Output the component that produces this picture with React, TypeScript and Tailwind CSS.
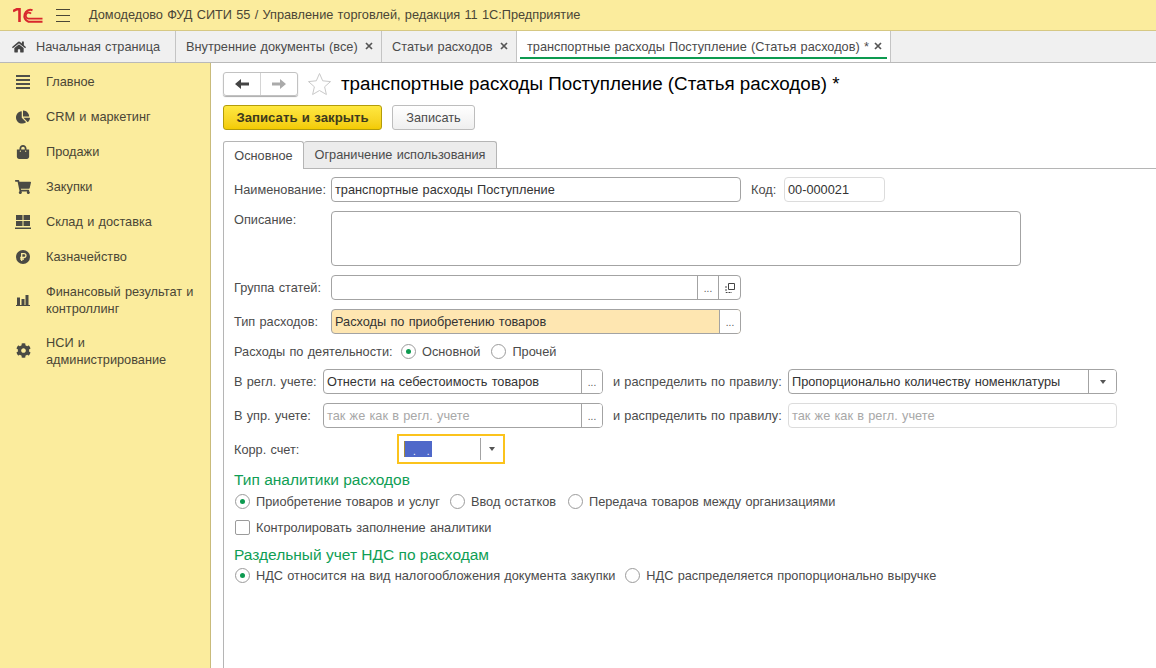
import { ReactNode } from 'react';
import { FaHome, FaChartPie, FaShoppingBag, FaShoppingCart, FaCog } from 'react-icons/fa';

function Logo() {
  return (
    <svg width="30" height="15" viewBox="0 0 30 15" fill="none" stroke="#d8272d">
      <path d="M0 3.2 L4 1.2 H6.5 V14" strokeWidth="2.6" />
      <path d="M29.5 13.8 H15.5 A6 6 0 1 1 19.5 2.2" strokeWidth="2" />
      <path d="M29.5 10.6 H15.5 A3 3 0 1 1 18 5.6" strokeWidth="1.8" />
    </svg>
  );
}

function Burger() {
  return (
    <div className="flex h-[13px] w-[14px] flex-col justify-between">
      <div className="h-px bg-[#4a4636]" />
      <div className="h-px bg-[#4a4636]" />
      <div className="h-px bg-[#4a4636]" />
    </div>
  );
}

function Close() {
  return (
    <svg width="8" height="8" viewBox="0 0 8 8" stroke="#555" strokeWidth="1.7" className="relative -top-px left-px shrink-0">
      <path d="M1 1 L7 7 M7 1 L1 7" />
    </svg>
  );
}

function PageTab({ label, width, active }: { label: string; width: string; active?: boolean }) {
  return (
    <div className={`relative flex h-full items-center justify-between border-r border-[#c4c4c4] pr-[9px] pl-[10px] ${width} ${active ? 'bg-white' : ''}`}>
      <span className="whitespace-nowrap">{label}</span>
      <Close />
      {active && <div className="absolute right-[3px] bottom-[3px] left-[3px] h-[2px] bg-[#0d9a50]" />}
    </div>
  );
}

const MainIcon = () => (
  <svg width="14" height="14" viewBox="0 0 14 14" fill="#4f4f4a">
    <path d="M0 0h14v2H0zM0 4h14v2H0zM0 8h14v2H0zM0 12h14v2H0z" />
  </svg>
);

const StockIcon = () => (
  <svg width="16" height="14" viewBox="0 0 16 14" fill="#4a4a44">
    <path d="M1 0h6.5v5H1zM8.5 0H15v5H8.5zM1 6h6.5v5H1zM8.5 6H15v5H8.5zM0 12.5h16V14H0z" />
  </svg>
);

const RubleIcon = () => (
  <svg width="14" height="14" viewBox="0 0 14 14">
    <circle cx="7" cy="7" r="7" fill="#4a4a44" />
    <path d="M5.7 11V3.6H8a1.9 1.9 0 0 1 0 3.9H4.2M4.2 9.2H8" fill="none" stroke="#fbec9d" strokeWidth="1.3" />
  </svg>
);

const FinanceIcon = () => (
  <svg width="14" height="11" viewBox="0 0 14 11" fill="#4a4a44">
    <path d="M1 2.5h3V10H1zM5.5 4h3v6h-3zM9.5 0h3v10h-3zM0 10h14v1H0z" />
  </svg>
);

const menu: { label: ReactNode; icon: ReactNode; h: string }[] = [
  { label: 'Главное', icon: <MainIcon />, h: 'h-[35px]' },
  { label: 'CRM и маркетинг', icon: <FaChartPie size={14} color="#4a4a44" />, h: 'h-[35px]' },
  { label: 'Продажи', icon: <FaShoppingBag size={14} color="#4a4a44" />, h: 'h-[35px]' },
  { label: 'Закупки', icon: <FaShoppingCart size={16} color="#4a4a44" />, h: 'h-[35px]' },
  { label: 'Склад и доставка', icon: <StockIcon />, h: 'h-[35px]' },
  { label: 'Казначейство', icon: <RubleIcon />, h: 'h-[35px]' },
  { label: <>Финансовый результат и<br />контроллинг</>, icon: <FinanceIcon />, h: 'h-[52px]' },
  { label: <>НСИ и<br />администрирование</>, icon: <FaCog size={15} color="#4a4a44" />, h: 'h-[49px]' },
];

function Sidebar() {
  return (
    <aside className="w-[211px] shrink-0 border-r border-[#c9bb7b] bg-[#fbec9d] pt-[1px] text-[#4a4636]">
      {menu.map((m, i) => (
        <div key={i} className={`flex items-center ${m.h}`}>
          <div className="flex w-[46px] shrink-0 justify-center pr-[1px] pl-[1px]">{m.icon}</div>
          <div className="leading-[17px]">{m.label}</div>
        </div>
      ))}
    </aside>
  );
}

function Field({ children, width, bg, dim, h }: { children?: ReactNode; width: string; bg?: string; dim?: boolean; h?: string }) {
  return (
    <div className={`flex ${h ?? 'h-[25px]'} ${width} shrink-0 overflow-hidden rounded-[4px] border ${dim ? 'border-[#dcdcdc]' : 'border-[#a3a3a3]'} ${bg ?? 'bg-white'} text-[#333]`}>
      {children}
    </div>
  );
}

function Value({ text, grey }: { text?: string; grey?: boolean }) {
  return <div className={`flex-1 truncate pl-[3px] leading-[24px] ${grey ? 'text-[#a8a8a8]' : ''}`}>{text}</div>;
}

function Dots() {
  return <div className="flex w-[21px] shrink-0 items-end justify-center border-l border-[#a3a3a3] bg-white pb-[5px] text-[10px] leading-[10px] text-[#555]">...</div>;
}

function Arrow({ width }: { width: string }) {
  return (
    <div className={`flex shrink-0 items-center justify-center border-l border-[#a3a3a3] bg-white ${width}`}>
      <div className="h-0 w-0 border-x-[3.5px] border-t-[4px] border-x-transparent border-t-[#555]" />
    </div>
  );
}

function Radio({ label, on }: { label: string; on?: boolean }) {
  return (
    <div className="flex items-center gap-[6px] whitespace-nowrap">
      <div className="flex h-[15px] w-[15px] items-center justify-center rounded-full border border-[#9b9b9b] bg-white">
        {on && <div className="h-[5px] w-[5px] rounded-full bg-[#0d9a50]" />}
      </div>
      {label}
    </div>
  );
}

function Form() {
  return (
    <div className="flex-1 border-l border-[#b5b5b5] pt-[8px] pl-[10px] text-[#4b4b4b]">
      <div className="flex items-center">
        <div className="w-[97px] shrink-0">Наименование:</div>
        <Field width="w-[410px]"><Value text="транспортные расходы Поступление" /></Field>
        <div className="ml-[10px] w-[33px] shrink-0">Код:</div>
        <Field width="w-[101px]" dim><Value text="00-000021" /></Field>
      </div>

      <div className="mt-[9px] flex items-start">
        <div className="w-[97px] shrink-0 pt-[1px]">Описание:</div>
        <Field width="w-[690px]" h="h-[55px]" />
      </div>

      <div className="mt-[9px] flex items-center">
        <div className="w-[97px] shrink-0">Группа статей:</div>
        <Field width="w-[410px]">
          <Value />
          <Dots />
          <div className="flex w-[22px] shrink-0 items-center justify-center border-l border-[#a3a3a3]">
            <svg width="10" height="10" viewBox="0 0 10 10" fill="none" stroke="#444">
              <path d="M3.5 .5h6v6h-6z" />
              <path d="M1 3v6.5h6" strokeDasharray="2 1" />
            </svg>
          </div>
        </Field>
      </div>

      <div className="mt-[9px] flex items-center">
        <div className="w-[97px] shrink-0">Тип расходов:</div>
        <Field width="w-[410px]" bg="bg-[#fee6b1]">
          <Value text="Расходы по приобретению товаров" />
          <Dots />
        </Field>
      </div>

      <div className="mt-[7px] flex h-[21px] items-center">
        <div className="w-[167px] shrink-0 whitespace-nowrap">Расходы по деятельности:</div>
        <Radio label="Основной" on />
        <div className="ml-[11px]"><Radio label="Прочей" /></div>
      </div>

      <div className="mt-[7px] flex items-center">
        <div className="w-[89px] shrink-0">В регл. учете:</div>
        <Field width="w-[280px]">
          <Value text="Отнести на себестоимость товаров" />
          <Dots />
        </Field>
        <div className="ml-[10px] w-[175px] shrink-0 whitespace-nowrap">и распределить по правилу:</div>
        <Field width="w-[329px]">
          <Value text="Пропорционально количеству номенклатуры" />
          <Arrow width="w-[28px]" />
        </Field>
      </div>

      <div className="mt-[9px] flex items-center">
        <div className="w-[89px] shrink-0">В упр. учете:</div>
        <Field width="w-[280px]">
          <Value text="так же как в регл. учете" grey />
          <Dots />
        </Field>
        <div className="ml-[10px] w-[175px] shrink-0 whitespace-nowrap">и распределить по правилу:</div>
        <Field width="w-[329px]" dim><Value text="так же как в регл. учете" grey /></Field>
      </div>

      <div className="mt-[6px] flex items-center">
        <div className="w-[163px] shrink-0 pt-[1px]">Корр. счет:</div>
        <div className="flex h-[30px] w-[108px] items-center border-2 border-[#fbc31c] pl-[5px]">
          <div className="flex h-[16px] w-[28px] items-end gap-[11px] border-l border-[#a58a3a] bg-[#4f68c9] pl-[8px] text-[10px] leading-[11px] text-white">
            <span>.</span>
            <span>.</span>
          </div>
          <div className="ml-[48px] flex h-[22px] flex-1">
            <Arrow width="w-full" />
          </div>
        </div>
      </div>

      <div className="mt-[6px] text-[15.5px] leading-[20px] [word-spacing:0] text-[#0f9e55]">Тип аналитики расходов</div>
      <div className="mt-[1px] flex h-[21px] items-center gap-[10px] pl-[1px]">
        <Radio label="Приобретение товаров и услуг" on />
        <Radio label="Ввод остатков" />
        <div className="ml-[2px]"><Radio label="Передача товаров между организациями" /></div>
      </div>
      <div className="mt-[5px] flex h-[21px] items-center gap-[6px] pl-[1px]">
        <div className="h-[15px] w-[15px] rounded-[2px] border border-[#9b9b9b] bg-white" />
        Контролировать заполнение аналитики
      </div>
      <div className="mt-[7px] text-[15.5px] leading-[20px] [word-spacing:0] text-[#0f9e55]">Раздельный учет НДС по расходам</div>
      <div className="flex h-[21px] items-center gap-[10px] pl-[1px]">
        <Radio label="НДС относится на вид налогообложения документа закупки" on />
        <Radio label="НДС распределяется пропорционально выручке" />
      </div>
    </div>
  );
}

export default function App() {
  return (
    <div className="flex h-[668px] w-[1156px] flex-col overflow-hidden bg-white text-[12.75px] leading-[16px] [word-spacing:0.7px] font-['Liberation_Sans',Arial,sans-serif]">
      <header className="flex h-[31px] shrink-0 items-center border-b border-[#d6c883] bg-[#fbec9d] text-[#4a4636]">
        <div className="ml-[13px] w-[43px]"><Logo /></div>
        <Burger />
        <div className="ml-[19px]">Домодедово ФУД СИТИ 55 / Управление торговлей, редакция 11 1С:Предприятие</div>
      </header>

      <nav className="flex h-[32px] shrink-0 items-center border-b border-[#b9b9b9] bg-[#f0f0f0] text-[#4b4b4b]">
        <div className="flex h-full w-[176px] items-center border-r border-[#c4c4c4]">
          <div className="flex w-[36px] justify-center pl-[1px]"><FaHome size={14} color="#444" /></div>
          Начальная страница
        </div>
        <PageTab label="Внутренние документы (все)" width="w-[206px]" />
        <PageTab label="Статьи расходов" width="w-[135px]" />
        <PageTab label="транспортные расходы Поступление (Статья расходов) *" width="w-[374px]" active />
      </nav>

      <div className="flex min-h-0 flex-1">
        <Sidebar />
        <main className="flex min-w-0 flex-1 flex-col pt-[9px] pl-[12px]">
          <div className="flex h-[24px] items-center">
            <div className="flex h-[24px] w-[75px] rounded-[3px] border border-[#c2c2c2] shadow-[0_1px_1px_#aaa]">
              <div className="flex flex-1 items-center justify-center border-r border-[#d4d4d4]">
                <svg width="14" height="10" viewBox="0 0 14 10" fill="#444"><path d="M0 5 6 0v3.5h8v3H6V10z" /></svg>
              </div>
              <div className="flex flex-1 items-center justify-center">
                <svg width="14" height="10" viewBox="0 0 14 10" fill="#aaa"><path d="M14 5 8 0v3.5H0v3h8V10z" /></svg>
              </div>
            </div>
            <svg width="25" height="24" viewBox="0 0 25 24" fill="none" stroke="#c9c9c9" className="ml-[9px]">
              <path d="M12.5 1.5l3.2 7.3 7.8.8-5.9 5.2 1.8 7.7-6.9-4-6.9 4 1.8-7.7-5.9-5.2 7.8-.8z" />
            </svg>
            <div className="ml-[9px] text-[18.8px] whitespace-nowrap text-black [word-spacing:0]">транспортные расходы Поступление (Статья расходов) *</div>
          </div>

          <div className="mt-[9px] flex gap-[10px]">
            <div className="flex h-[25px] w-[159px] items-center justify-center rounded-[3px] border border-[#b39c0a] bg-gradient-to-b from-[#ffe83f] to-[#f3cb00] text-[13.2px] font-bold text-[#3d3a1c]">Записать и закрыть</div>
            <div className="flex h-[25px] w-[83px] items-center justify-center rounded-[3px] border border-[#bdbdbd] bg-gradient-to-b from-white to-[#efefef] text-[#4b4b4b]">Записать</div>
          </div>

          <div className="mt-[11px] flex h-[28px] shrink-0 items-end border-b border-[#b5b5b5] text-[#4b4b4b]">
            <div className="relative top-px flex h-[28px] w-[81px] items-center justify-center rounded-t-[3px] border border-b-0 border-[#b5b5b5] bg-white">Основное</div>
            <div className="flex h-[27px] w-[193px] items-center justify-center rounded-t-[3px] border border-b-0 border-l-0 border-[#b5b5b5] bg-[#ececec]">Ограничение использования</div>
          </div>

          <Form />
        </main>
      </div>
    </div>
  );
}
